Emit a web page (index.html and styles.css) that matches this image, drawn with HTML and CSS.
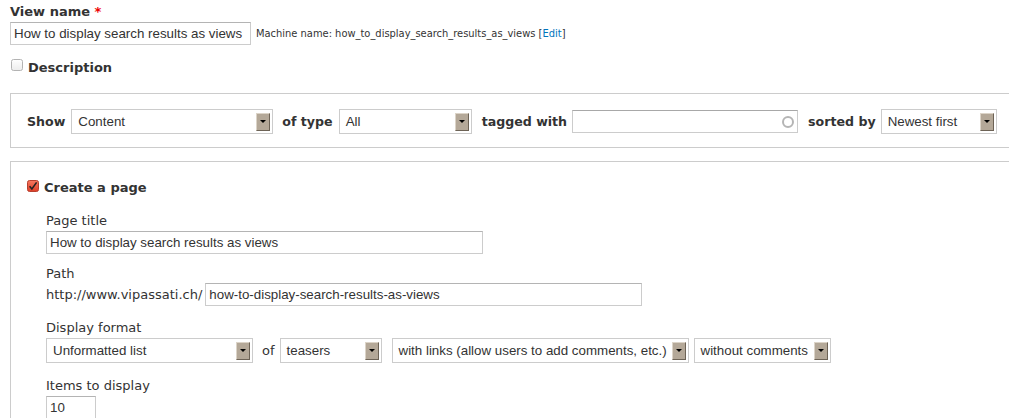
FILE: index.html
```html
<!DOCTYPE html>
<html lang="en">
<head>
    <meta charset="UTF-8" />
    <title>Add new view</title>
    <link rel="stylesheet" href="styles.css">
</head>
<body>
<div class="page">
    <div class="form-item">
        <div class="label-strong">View name <span class="required">*</span></div>
        <div class="name-row">
            <input class="text name" value="How to display search results as views" />
            <span class="machine">Machine name: how_to_display_search_results_as_views [<a href="#">Edit</a>]</span>
        </div>
    </div>

    <div class="check-row desc">
        <svg class="checkbox" width="12" height="12" viewBox="0 0 12 12">
            <defs>
                <linearGradient id="off" x1="0" y1="0" x2="0" y2="1">
                    <stop offset="0" stop-color="#ffffff"/>
                    <stop offset="1" stop-color="#ececec"/>
                </linearGradient>
            </defs>
            <rect x="0.5" y="0.5" width="11" height="11" rx="2" fill="url(#off)" stroke="#b3b3b3"/>
        </svg>
        <span class="label-strong">Description</span>
    </div>

    <div class="box show-box">
        <div class="inline-row">
            <span class="label-strong lbl">Show</span>
            <div class="select w-content"><span>Content</span><span class="arrow"></span></div>
            <span class="label-strong lbl">of type</span>
            <div class="select w-type"><span>All</span><span class="arrow"></span></div>
            <span class="label-strong lbl lbl-tight">tagged with</span>
            <div class="textfield w-tags"><span class="throbber"></span></div>
            <span class="label-strong lbl lbl-tight">sorted by</span>
            <div class="select w-sort"><span>Newest first</span><span class="arrow"></span></div>
        </div>
    </div>

    <div class="box page-box">
        <div class="check-row">
            <svg class="checkbox" width="12" height="12" viewBox="0 0 12 12">
                <defs>
                    <linearGradient id="on" x1="0" y1="0" x2="0" y2="1">
                        <stop offset="0" stop-color="#f7785f"/>
                        <stop offset="1" stop-color="#de3f28"/>
                    </linearGradient>
                </defs>
                <rect x="0.5" y="0.5" width="11" height="11" rx="2" fill="url(#on)" stroke="#b8402f"/>
                <path d="M2.6 6.2 L4.9 9 L9.6 2.4" fill="none" stroke="#222" stroke-width="1.6"/>
            </svg>
            <span class="label-strong">Create a page</span>
        </div>

        <div class="options">
            <div class="field field-title">
                <div class="field-label">Page title</div>
                <input class="text w-title" value="How to display search results as views" />
            </div>
            <div class="field field-path">
                <div class="field-label">Path</div>
                <div class="inline-row">
                    <span class="prefix">http://www.vipassati.ch/</span>
                    <input class="text w-path" value="how-to-display-search-results-as-views" />
                </div>
            </div>
            <div class="field field-format">
                <div class="field-label">Display format</div>
                <div class="inline-row">
                    <div class="select w-format"><span>Unformatted list</span><span class="arrow"></span></div>
                    <span class="lbl lbl-tight">of</span>
                    <div class="select w-teasers"><span>teasers</span><span class="arrow"></span></div>
                    <div class="select w-links gap-small"><span>with links (allow users to add comments, etc.)</span><span class="arrow"></span></div>
                    <div class="select w-comments"><span>without comments</span><span class="arrow"></span></div>
                </div>
            </div>
            <div class="field">
                <div class="field-label">Items to display</div>
                <input class="text w-items" value="10" />
            </div>
        </div>
    </div>
</div>
</body>
</html>
```

FILE: styles.css
```css
* {
    margin: 0;
    padding: 0;
    box-sizing: border-box;
}
html, body {
    height: 100%;
    background: #fff;
}
body {
    font-family: "DejaVu Sans", sans-serif;
    font-size: 13px;
    line-height: 16px;
    color: #333;
    overflow: hidden;
}
.page {
    padding: 4px 0 0 10px;
}
.label-strong {
    font-weight: bold;
}
.required {
    color: #e00;
}
.name-row {
    display: flex;
    align-items: center;
    margin-top: 2px;
}
input.text {
    display: block;
    font-family: "Liberation Sans", Arial, sans-serif;
    font-size: 13.33px;
    color: #333;
    background: #fff;
    border: 1px solid #ccc;
    border-top-color: #b4b4b4;
    padding: 0 3px;
    height: 23px;
    outline: none;
}
.name {
    width: 241px;
}
.machine {
    font-family: "DejaVu Sans Condensed", "DejaVu Sans", sans-serif;
    font-stretch: condensed;
    font-size: 11px;
    margin-left: 5px;
    padding-top: 1px;
    white-space: nowrap;
}
.machine a {
    color: #0074bd;
    text-decoration: none;
}
.check-row {
    display: flex;
    align-items: flex-start;
}
.checkbox {
    flex: none;
    margin-right: 5px;
}
.desc {
    margin-top: 15px;
    padding-left: 1px;
}
.desc .checkbox {
    margin-top: -1px;
    margin-right: 5px;
}
.box {
    border: 1px solid #ccc;
    margin-right: -20px;
}
.show-box {
    margin-top: 17px;
    padding: 15px 16px 13px;
}
.show-box .lbl {
    font-size: 12.6px;
}
.page-box {
    margin-top: 13px;
    padding: 18px 16px 0;
}
.inline-row {
    display: flex;
    align-items: center;
    white-space: nowrap;
}
.inline-row > * {
    flex: none;
}
.lbl {
    margin-right: 6px;
}
.lbl-tight {
    margin-right: 5px;
}
/* select look-alike with bevelled button */
.select {
    display: flex;
    align-items: center;
    justify-content: space-between;
    height: 25px;
    border: 1px solid #ccc;
    background: #fff;
    padding: 0 2px 0 6px;
    margin-right: 9px;
    font-family: "Liberation Sans", Arial, sans-serif;
    font-size: 13.33px;
    white-space: nowrap;
}
.arrow {
    flex: none;
    width: 14px;
    height: 18px;
    background: #b4a898;
    border: 1px solid;
    border-color: #dcd4c8 #6d6356 #6d6356 #dcd4c8;
    display: flex;
    align-items: center;
    justify-content: center;
}
.arrow::after {
    content: "";
    border-left: 3px solid transparent;
    border-right: 3px solid transparent;
    border-top: 3px solid #000;
}
.textfield {
    display: flex;
    align-items: center;
    justify-content: flex-end;
    height: 23px;
    border: 1px solid #ccc;
    border-top-color: #a8a8a8;
    padding-right: 3px;
    margin-right: 10px;
}
.throbber {
    width: 12px;
    height: 12px;
    border: 2px solid #b5b5b5;
    border-radius: 50%;
}
.w-content { width: 202px; }
.w-type { width: 133px; margin-right: 10px; }
.w-tags { width: 226px; }
.w-sort { width: 116px; }
.w-format { width: 207px; }
.w-teasers { width: 102px; margin-right: 10px; }
.w-links { width: 297px; }
.w-comments { width: 137px; }
.gap-small { margin-right: 5px; }
.options {
    padding-left: 19px;
}
.field {
    margin-top: 15px;
}
.field-title {
    margin-top: 17px;
}
.field-path {
    margin-top: 12px;
}
.field-format {
    margin-top: 14px;
}
.field-label {
    margin-bottom: 2px;
}
.field-path .field-label {
    margin-bottom: 1px;
}
.w-title {
    width: 437px;
    height: 22px;
}
.prefix {
    margin-right: 3px;
}
.w-path {
    width: 437px;
}
.w-items {
    width: 50px;
}
```
